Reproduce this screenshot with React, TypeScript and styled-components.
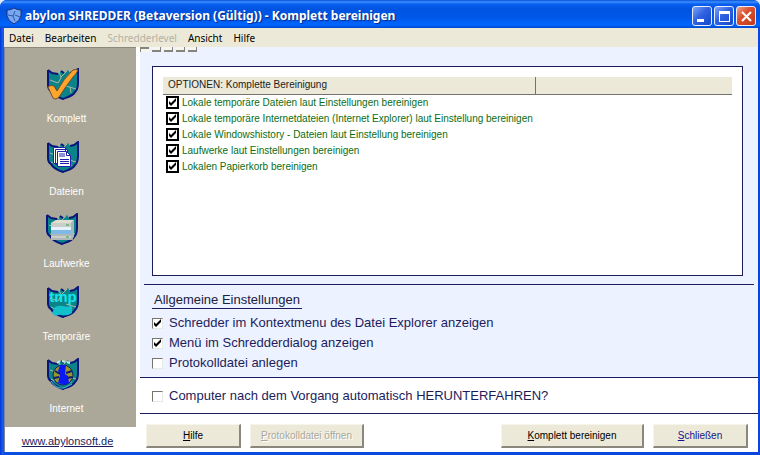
import React, { useState } from "react";
import styled, { createGlobalStyle, css } from "styled-components";

const navy = "#1c1c5c";
const compact = `10px/16px "Liberation Sans", Arial, sans-serif`;

const GlobalStyle = createGlobalStyle`
  *, *::before, *::after { box-sizing: border-box; }
  body { margin: 0; background: #dfe9fb; font-family: "Liberation Sans", Arial, sans-serif; }
  button, input { font: inherit; margin: 0; }
`;

const Window = styled.div`
  display: flex;
  flex-direction: column;
  min-height: 100vh;
  padding: 0 2px 3px 4px;
  background: linear-gradient(90deg, #0034d8 0, #1c62ee 3px, #0a4fe0 4px, #0a46dc 100%);
  border-radius: 7px 7px 0 0;
  overflow: hidden;
`;

const TitleBar = styled.header`
  display: flex;
  align-items: center;
  height: 28px;
  margin: 0 -2px 0 -4px;
  padding: 4px 4px 0 6px;
  background: linear-gradient(180deg, #0a50d8 0, #3a90ff 2px, #0a5ef0 4px, #0054e0 9px, #0058ea 18px, #0066ff 25px, #0048cc 28px);
`;

const Title = styled.h1`
  flex: 1;
  margin: 0 0 0 3px;
  font: bold 12px/20px "Noto Sans", sans-serif;
  color: #fff;
  text-shadow: 1px 1px 1px #0a2a86;
  white-space: nowrap;
`;

const Captions = styled.div`
  display: flex;
  gap: 2px;
`;

const CaptionButton = styled.button<{ $close?: boolean }>`
  display: flex;
  width: 20px;
  height: 20px;
  padding: 0;
  border: 1px solid #e6eeff;
  border-radius: 3px;
  background: ${(p) =>
    p.$close
      ? "linear-gradient(135deg, #f0a58c, #dc5030 40%, #c03c18)"
      : "linear-gradient(135deg, #7ea4f6, #2f62e2 45%, #1848cc)"};
`;

const MenuBar = styled.nav`
  display: flex;
  align-items: center;
  gap: 11px;
  height: 19px;
  padding: 0 5px;
  background: #ece9d8;
`;

const MenuItem = styled.button`
  padding: 0;
  border: 0;
  background: none;
  font: 10px/18px "Noto Sans", sans-serif;
  color: #000;
  &:disabled { color: #b4b1a2; }
`;

const Body = styled.div`
  display: flex;
  flex: 1;
  background: #fff;
`;

const Sidebar = styled.aside`
  display: flex;
  flex-direction: column;
  width: 132px;
  border-left: 1px solid #7c86a0;
`;

const SideNav = styled.nav`
  display: flex;
  flex: 1;
  flex-direction: column;
  justify-content: space-between;
  align-items: center;
  padding: 20px 8px 10px 0;
  background: #aca899;
  border-top: 1px solid #8c897c;
`;

const SideButton = styled.button`
  display: flex;
  flex-direction: column;
  align-items: center;
  gap: 11px;
  padding: 0;
  border: 0;
  background: none;
  font: ${compact};
  color: #fff;
`;

const ShieldIcon = styled.svg`
  margin-right: 8px;
`;

const SiteLink = styled.a`
  padding-right: 6px;
  font: ${compact};
  font-size: 11px;
  line-height: 28px;
  height: 25px;
  text-align: center;
  color: ${navy};
`;

const Main = styled.main`
  display: flex;
  flex: 1;
  flex-direction: column;
  padding-left: 4px;
`;

const Upper = styled.div`
  display: flex;
  flex: 1;
  flex-direction: column;
  background: #ecf2ff;
  border-bottom: 1px solid ${navy};
`;

const ToolStrip = styled.div`
  display: flex;
  gap: 3px;
  height: 19px;
`;

const ToolButton = styled.button<{ $first?: boolean }>`
  width: 9px;
  height: 5px;
  padding: 0;
  border: solid #85837c;
  border-width: ${(p) => (p.$first ? "2px 0 0 1px" : "0 1px 2px 0")};
  background: #f6f5ee;
`;

const OptionsPanel = styled.section`
  flex: 1;
  margin: 0 15px 0 12px;
  padding: 10px;
  background: #fff;
  border: 1px solid ${navy};
`;

const OptionsTable = styled.table`
  width: 100%;
  border-collapse: collapse;
  table-layout: fixed;
  font: ${compact};
`;

const HeadCell = styled.th<{ $first?: boolean }>`
  height: 17px;
  padding: 0 5px;
  background: #ece9d8;
  border-bottom: 1px solid #74726a;
  font-weight: normal;
  text-align: left;
  color: #222;
  ${(p) => p.$first && css`width: 372px; border-right: 1px solid #74726a;`}
`;

const OptionCell = styled.td`
  height: 16px;
  padding: 0 3px;
  color: #0a6e14;
`;

const tick = `url("data:image/svg+xml,%3Csvg xmlns='http://www.w3.org/2000/svg' viewBox='0 0 9 9'%3E%3Cpath d='M1 3v3l2 2 5-5V0L3 5z'/%3E%3C/svg%3E")`;

const CheckLabel = styled.label<{ $large?: boolean }>`
  display: flex;
  align-items: center;
  gap: ${(p) => (p.$large ? "6px" : "3px")};
  ${(p) => p.$large && css`font-size: 13px; line-height: 20px; color: ${navy};`}
`;

const CheckBox = styled.input<{ $sunken?: boolean }>`
  appearance: none;
  flex: none;
  width: ${(p) => (p.$sunken ? 11 : 13)}px;
  height: ${(p) => (p.$sunken ? 11 : 13)}px;
  border: ${(p) => (p.$sunken ? "1px solid" : "2px solid #000")};
  border-color: ${(p) => (p.$sunken ? "#77756c #e8e8e4 #e8e8e4 #77756c" : "#000")};
  background: #fff center / 9px 9px no-repeat;
  &:checked { background-image: ${tick}; }
`;

const Settings = styled.section`
  margin: 8px 4px 0;
  padding: 5px 8px 4px;
  border-top: 1px solid ${navy};
`;

const SettingsTitle = styled.h2`
  display: inline-block;
  margin: 0 0 4px;
  padding: 0 2px;
  border-bottom: 1px solid ${navy};
  font-size: 13px;
  font-weight: normal;
  line-height: 17px;
  color: #20203c;
`;

const ShutdownRow = styled.div`
  padding: 8px 12px 7px;
  border-bottom: 1px solid ${navy};
`;

const Footer = styled.footer`
  display: flex;
  align-items: center;
  gap: 9px;
  height: 38px;
  padding: 10px 10px 4px 6px;
`;

const PushButton = styled.button<{ $wide?: number; $accent?: boolean; $end?: boolean }>`
  width: ${(p) => p.$wide ?? 95}px;
  height: 24px;
  padding: 0;
  margin-left: ${(p) => (p.$end ? "auto" : 0)};
  border: solid;
  border-width: 1px 2px 2px 1px;
  border-color: #f6f5ec #8a887c #8a887c #f6f5ec;
  background: #ece9d8;
  font: ${compact};
  color: ${(p) => (p.$accent ? "#14148c" : "#000")};
  &:disabled { color: #aaa798; text-shadow: 1px 1px 0 #fff; }
`;

function Shield({ children }: { children: React.ReactNode }) {
  return (
    <ShieldIcon width="32" height="32" viewBox="0 0 32 32" aria-hidden="true">
      <path
        d="M1 2l4 3 6 1 3-3 3 2 4-3 2 3 4-1 4-3v14c0 5-1 7-3 9-2 4-7 5-12 7-6-2-10-4-12-8-2-1-3-3-3-6z"
        fill="#0a8488"
      />
      <path
        d="M1 2l4 3 6 1M14 3l3 2M23 5l4-1 4-3v14c0 5-1 7-3 9-2 4-7 5-12 7-6-2-10-4-12-8-2-1-3-3-3-6V2"
        fill="none"
        stroke="#0a167c"
        strokeWidth="2"
      />
      <path d="M12 3l2 7-3 5M14 9l6-6M3 12l8 3M19 18l10 3M23 19l1 6M4 21l4 2" stroke="#aab8a4" fill="none" />
      {children}
    </ShieldIcon>
  );
}

const glyphs = {
  check: (
    <path
      d="M1 19q3-3 6-1l3 5Q17 10 26 2q3-1 5 0-1 3-5 7-7 9-14 20-2 2-4 2-2 0-3-3z"
      fill="#ffa42c"
      stroke="#6b5028"
    />
  ),
  files: (
    <g fill="#fff" stroke="#2020a8">
      <path d="M6.500 6.500h12v16h-12zM8.500 8.500h12v15h-12z" />
      <path d="M10.500 10.500h9l4 4v11h-13z" />
      <path d="M19.500 10.500v4h4M13 12v4M15 12v4M17 12v4M13 18.500h9M13 20.500h9M13 22.500h9" fill="none" />
    </g>
  ),
  drives: (
    <g>
      <path d="M5 10l5-3h18l-1 3v17H5z" fill="#8a9898" />
      <path d="M5 10h20v17H5z" fill="#c9ceca" />
      <path d="M5 10l5-3h18l-3 3z" fill="#dfded0" />
      <path d="M5 14h23v3H5z" fill="#e6f3ff" />
      <path d="M5 17h23v4H5z" fill="#7fb9e8" />
      <path d="M5 22h20M5 26h20" stroke="#96a2a4" />
      <path d="M25 10l3-3v17l-3 3z" fill="#a8b6b8" />
      <path d="M20 12h3M20 24h3" stroke="#28a848" />
    </g>
  ),
  temp: (
    <g fill="#14e4ea">
      <text x="16" y="16" textAnchor="middle" fontFamily="Liberation Sans" fontWeight="bold" fontSize="15">
        tmp
      </text>
      <path d="M8 21q4-2 8-1 5 2 9-1v8q-4 3-8 2-5-1-9 1l-3-3z" fill="#12c0cc" />
    </g>
  ),
  globe: (
    <g>
      <circle cx="16" cy="17" r="10" fill="#9a962c" stroke="#10205c" />
      <path d="M13 7h6l-1 9 3 2 1 7-5 2-6-2 2-8-2-4z" fill="#0a18f4" />
      <path d="M8 13l5 3M19 15l6-2M20 20l5-1M7 20l5-1" stroke="#101c70" strokeWidth="2" />
      <path d="M4 23q5 8 13 7l8-4" fill="none" stroke="#42c8d0" />
      <path d="M10 5l3-2M15 3l3 1M20 4l3 1" fill="none" stroke="#b6eee8" strokeWidth="2" />
    </g>
  ),
};

const sections: { label: string; glyph: keyof typeof glyphs }[] = [
  { label: "Komplett", glyph: "check" },
  { label: "Dateien", glyph: "files" },
  { label: "Laufwerke", glyph: "drives" },
  { label: "Temporäre", glyph: "temp" },
  { label: "Internet", glyph: "globe" },
];

const options = [
  "Lokale temporäre Dateien laut Einstellungen bereinigen",
  "Lokale temporäre Internetdateien (Internet Explorer) laut Einstellung bereinigen",
  "Lokale Windowshistory - Dateien laut Einstellung bereinigen",
  "Laufwerke laut Einstellungen bereinigen",
  "Lokalen Papierkorb bereinigen",
];

const settings = [
  { label: "Schredder im Kontextmenu des Datei Explorer anzeigen", on: true },
  { label: "Menü im Schredderdialog anzeigen", on: true },
  { label: "Protokolldatei anlegen", on: false },
];

function Check({ label, on, large }: { label: string; on: boolean; large?: boolean }) {
  const [checked, setChecked] = useState(on);
  return (
    <CheckLabel $large={large}>
      <CheckBox type="checkbox" $sunken={large} checked={checked} onChange={() => setChecked(!checked)} />
      {label}
    </CheckLabel>
  );
}

export default function App() {
  return (
    <>
      <GlobalStyle />
      <Window>
        <TitleBar>
          <svg width="16" height="18" viewBox="0 0 16 18" aria-hidden="true">
            <path d="M1 3q4 0 7-2 3 2 7 2v6q-1 5-7 8-6-3-7-8z" fill="#78a8f0" stroke="#173080" />
            <path d="M2 8l5 1 2-5M7 9l2 5M9 8l5 2" stroke="#3158b0" fill="none" />
          </svg>
          <Title>abylon SHREDDER (Betaversion (Gültig)) - Komplett bereinigen</Title>
          <Captions>
            <CaptionButton aria-label="Minimieren">
              <svg width="18" height="18" viewBox="0 0 18 18"><path d="M4 12h7v3H4z" fill="#fff" /></svg>
            </CaptionButton>
            <CaptionButton aria-label="Maximieren">
              <svg width="18" height="18" viewBox="0 0 18 18">
                <path d="M4 4h11v11H4zM5 7v7h9V7z" fill="#fff" fillRule="evenodd" />
              </svg>
            </CaptionButton>
            <CaptionButton aria-label="Beenden" $close>
              <svg width="18" height="18" viewBox="0 0 18 18">
                <path d="M5 5l9 9M14 5l-9 9" stroke="#fff" strokeWidth="2" />
              </svg>
            </CaptionButton>
          </Captions>
        </TitleBar>
        <MenuBar>
          <MenuItem>Datei</MenuItem>
          <MenuItem>Bearbeiten</MenuItem>
          <MenuItem disabled>Schredderlevel</MenuItem>
          <MenuItem>Ansicht</MenuItem>
          <MenuItem>Hilfe</MenuItem>
        </MenuBar>
        <Body>
          <Sidebar>
            <SideNav>
              {sections.map((s) => (
                <SideButton key={s.label}>
                  <Shield>{glyphs[s.glyph]}</Shield>
                  {s.label}
                </SideButton>
              ))}
            </SideNav>
            <SiteLink href="#">www.abylonsoft.de</SiteLink>
          </Sidebar>
          <Main>
            <Upper>
              <ToolStrip>
                <ToolButton $first aria-label="Werkzeug 1" />
                <ToolButton aria-label="Werkzeug 2" />
                <ToolButton aria-label="Werkzeug 3" />
                <ToolButton aria-label="Werkzeug 4" />
                <ToolButton aria-label="Werkzeug 5" />
              </ToolStrip>
              <OptionsPanel>
                <OptionsTable>
                  <thead>
                    <tr>
                      <HeadCell $first>OPTIONEN: Komplette Bereinigung</HeadCell>
                      <HeadCell />
                    </tr>
                  </thead>
                  <tbody>
                    {options.map((o) => (
                      <tr key={o}>
                        <OptionCell colSpan={2}>
                          <Check label={o} on />
                        </OptionCell>
                      </tr>
                    ))}
                  </tbody>
                </OptionsTable>
              </OptionsPanel>
              <Settings>
                <SettingsTitle>Allgemeine Einstellungen</SettingsTitle>
                {settings.map((s) => (
                  <Check key={s.label} label={s.label} on={s.on} large />
                ))}
              </Settings>
            </Upper>
            <ShutdownRow>
              <Check label="Computer nach dem Vorgang automatisch HERUNTERFAHREN?" on={false} large />
            </ShutdownRow>
            <Footer>
              <PushButton><u>H</u>ilfe</PushButton>
              <PushButton $wide={114} disabled><u>P</u>rotokolldatei öffnen</PushButton>
              <PushButton $wide={143} $end><u>K</u>omplett bereinigen</PushButton>
              <PushButton $accent><u>S</u>chließen</PushButton>
            </Footer>
          </Main>
        </Body>
      </Window>
    </>
  );
}
